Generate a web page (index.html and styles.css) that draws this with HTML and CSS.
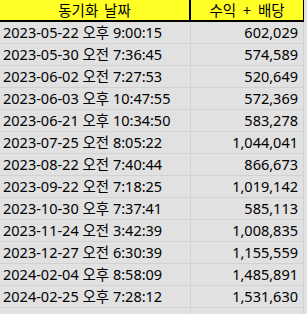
FILE: index.html
```html
<!DOCTYPE html>
<html lang="ko">
<head>
<meta charset="utf-8">
<link rel="stylesheet" href="styles.css">
</head>
<body>
<div class="sheet">
  <div class="hcell hcell-a">동기화 날짜</div>
  <div class="hcell hcell-b">수익 + 배당</div>

  <div class="cell date">2023-05-22 오후 9:00:15</div><div class="cell num">602,029</div>
  <div class="cell date">2023-05-30 오전 7:36:45</div><div class="cell num">574,589</div>
  <div class="cell date">2023-06-02 오전 7:27:53</div><div class="cell num">520,649</div>
  <div class="cell date">2023-06-03 오후 10:47:55</div><div class="cell num">572,369</div>
  <div class="cell date">2023-06-21 오후 10:34:50</div><div class="cell num">583,278</div>
  <div class="cell date">2023-07-25 오전 8:05:22</div><div class="cell num">1,044,041</div>
  <div class="cell date">2023-08-22 오전 7:40:44</div><div class="cell num">866,673</div>
  <div class="cell date">2023-09-22 오전 7:18:25</div><div class="cell num">1,019,142</div>
  <div class="cell date">2023-10-30 오후 7:37:41</div><div class="cell num">585,113</div>
  <div class="cell date">2023-11-24 오전 3:42:39</div><div class="cell num">1,008,835</div>
  <div class="cell date">2023-12-27 오전 6:30:39</div><div class="cell num">1,155,559</div>
  <div class="cell date">2024-02-04 오후 8:58:09</div><div class="cell num">1,485,891</div>
  <div class="cell date">2024-02-25 오후 7:28:12</div><div class="cell num">1,531,630</div>
  <div class="cell date"></div><div class="cell num"></div>
</div>
</body>
</html>
```
FILE: styles.css
```css
html, body {
  margin: 0;
  padding: 0;
  background: #e1e1e1;
}
body {
  font-family: "Noto Sans", "Noto Sans CJK KR", sans-serif;
  font-size: 14.5px;
  color: #000;
}
.sheet {
  display: grid;
  grid-template-columns: 191px 113px;
  grid-auto-rows: 22px;
}
.hcell {
  box-sizing: border-box;
  background: #ffff26;
  border-bottom: 2px solid #000;
  display: flex;
  align-items: center;
  justify-content: center;
  line-height: 1;
}
.hcell-a { border-right: 2px solid #000; word-spacing: 2px; }
.hcell-b { border-right: 1px solid #000; word-spacing: 3px; }
.cell {
  box-sizing: border-box;
  border-right: 1px solid #d2d2d2;
  border-bottom: 1px solid #d2d2d2;
  display: flex;
  align-items: center;
  white-space: nowrap;
  line-height: 1;
}
.date { padding-left: 3px; }
.num { justify-content: flex-end; padding-right: 5px; }
```
